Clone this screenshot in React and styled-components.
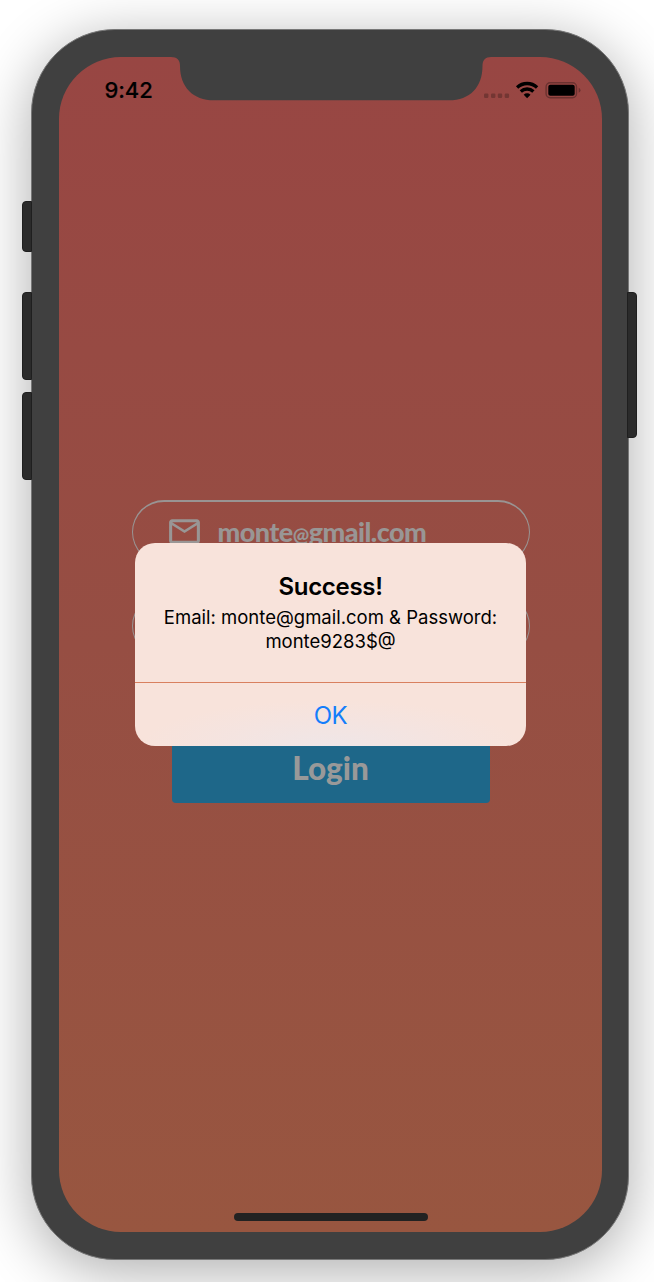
import React from "react";
import styled, { createGlobalStyle } from "styled-components";
import { MdMailOutline, MdLockOutline } from "react-icons/md";

const GlobalStyle = createGlobalStyle`
  * { box-sizing: border-box; }
  body {
    margin: 0;
    background: #fff;
    overflow: hidden;
    font-family: Inter, "Liberation Sans", sans-serif;
  }
`;

const Page = styled.main`
  width: 654px;
  height: 1282px;
  padding: 29px 25px 22px 31px;
  overflow: hidden;
`;

const Phone = styled.div`
  position: relative;
  width: 598px;
  height: 1231px;
  padding: 27px 26px 27px 27px;
  border: 1px solid #777;
  border-radius: 84px;
  background: #404040;
  box-shadow: 0 11px 58px rgba(0, 0, 0, 0.33);
`;

const SideButton = styled.span`
  position: absolute;
  top: ${(p) => p.$top}px;
  ${(p) => p.$side}: ${(p) => (p.$side === "left" ? -10 : -9)}px;
  width: 10px;
  height: ${(p) => p.$height}px;
  background: #2b2b2b;
  border: 1px solid #1f1f1f;
  border-radius: ${(p) => (p.$side === "left" ? "4px 0 0 4px" : "0 4px 4px 0")};
`;

const Screen = styled.div`
  position: relative;
  width: 543px;
  height: 1175px;
  border-radius: 62px;
  overflow: hidden;
  display: flex;
  flex-direction: column;
  align-items: center;
  background: linear-gradient(#984643 0%, #964e43 50%, #985640 100%);
`;

const Notch = styled.svg`
  position: absolute;
  top: 0;
  left: 112px;
`;

const StatusBar = styled.header`
  width: 100%;
  height: 66px;
  padding: 0 20px 0 45.5px;
  display: flex;
  align-items: center;
  justify-content: space-between;
`;

const Time = styled.span`
  font-size: 22px;
  font-weight: 500;
  line-height: 26px;
  letter-spacing: -0.1px;
  color: #000;
  -webkit-text-stroke: 0.2px #000;
`;

const StatusIcons = styled.svg`
  display: block;
`;

const Form = styled.form`
  margin-top: 377px;
  width: 398px;
  display: flex;
  flex-direction: column;
  align-items: center;
`;

const Field = styled.label`
  width: 398px;
  height: 64px;
  margin-bottom: 30px;
  padding: 0 0 3px 33px;
  display: flex;
  align-items: center;
  gap: 16px;
  border: 1.4px solid #999493;
  border-top-width: 2px;
  border-radius: 32px;
  color: #999695;
  svg { width: 37px; height: 37px; flex: none; margin-right: -1px; }
`;

const FieldText = styled.span`
  display: flex;
  align-items: baseline;
  padding-top: 4px;
  font-family: Lato, sans-serif;
  font-size: 27px;
  font-weight: 900;
  line-height: 32px;
  letter-spacing: -0.55px;
`;

const AtSign = styled.span`
  font-size: 19.5px;
`;

const LoginButton = styled.button`
  width: 318px;
  height: 69px;
  margin-top: 46px;
  padding: 0;
  border: 0;
  border-radius: 4px;
  background: #1e6789;
  color: #999;
  font-family: Lato, sans-serif;
  font-size: 31.5px;
  font-weight: 900;
  line-height: 65px;
`;

const Overlay = styled.div`
  position: absolute;
  inset: 0;
  display: flex;
  align-items: center;
  justify-content: center;
`;

const Alert = styled.section`
  width: 391px;
  height: 203px;
  border-radius: 20px;
  overflow: hidden;
  display: flex;
  flex-direction: column;
  text-align: center;
  color: #000;
  background: radial-gradient(ellipse 190px 46px at 50% 100%, #efe6e7 0%, rgba(244, 228, 225, 0.8) 60%, transparent 100%), #f8e3db;
`;

const AlertBody = styled.div`
  height: 139px;
  padding-top: 29px;
`;

const AlertTitle = styled.h1`
  margin: 0;
  font-size: 24px;
  font-weight: 600;
  line-height: 30px;
  letter-spacing: -0.3px;
`;

const AlertText = styled.p`
  margin: 4px 0 0;
  font-size: 18.5px;
  line-height: 23.5px;
  white-space: nowrap;
`;

const AlertAction = styled.button`
  height: 64px;
  padding: 2px 0 0;
  border: 0;
  border-top: 1px solid #d9805f;
  background: transparent;
  color: #147efb;
  font-family: inherit;
  font-size: 24px;
  letter-spacing: -0.5px;
`;

const HomeIndicator = styled.span`
  width: 194px;
  height: 8px;
  margin-top: auto;
  margin-bottom: 11px;
  border-radius: 4px;
  background: #222;
`;

export default function App() {
  return (
    <Page>
      <GlobalStyle />
      <Phone>
        <SideButton $side="left" $top={171} $height={51} />
        <SideButton $side="left" $top={262} $height={88} />
        <SideButton $side="left" $top={362} $height={88} />
        <SideButton $side="right" $top={262} $height={146} />
        <Screen>
          <StatusBar>
            <Time>9:42</Time>
            <StatusIcons width="98" height="18" viewBox="0 0 98 18">
              <g fill="#733633">
                <rect x="0" y="12.5" width="4.4" height="4.4" rx="1.2" />
                <rect x="7" y="12.5" width="4.4" height="4.4" rx="1.2" />
                <rect x="13.8" y="12.5" width="4.4" height="4.4" rx="1.2" />
                <rect x="20.7" y="12.5" width="4.4" height="4.4" rx="1.2" />
              </g>
              <g fill="none" stroke="#000" strokeWidth="3.3">
                <path d="M33.1 6.5A14.5 14.5 0 0 1 53.1 6.5" />
                <path d="M36.8 10.5A9.2 9.2 0 0 1 49.4 10.5" />
              </g>
              <path d="M43.1 17.2L39.7 13.7A4.9 4.9 0 0 1 46.5 13.7Z" fill="#000" />
              <rect x="62.1" y="1.7" width="30.4" height="15" rx="4" fill="none" stroke="#6b3230" strokeWidth="1.4" />
              <rect x="64.3" y="3.8" width="26.4" height="11" rx="2" fill="#000" />
              <path d="M94.7 6.7Q96.5 7.6 96.5 9.3Q96.5 11 94.7 11.8Z" fill="#6b3230" />
            </StatusIcons>
          </StatusBar>
          <Form>
            <Field>
              <MdMailOutline />
              <FieldText>monte<AtSign>@</AtSign>gmail.com</FieldText>
            </Field>
            <Field>
              <MdLockOutline />
            </Field>
            <LoginButton type="button">Login</LoginButton>
          </Form>
          <HomeIndicator />
          <Notch width="320" height="44" viewBox="0 0 320 44">
            <path d="M0 0C6 0 9 3 9 9C9 30 22 43.3 43 43.3H278C299 43.3 311.5 30 311.5 9C311.5 3 314.5 0 320 0Z" fill="#404040" />
          </Notch>
          <Overlay>
            <Alert>
              <AlertBody>
                <AlertTitle>Success!</AlertTitle>
                <AlertText>
                  Email: monte@gmail.com &amp; Password:
                  <br />
                  monte9283$@
                </AlertText>
              </AlertBody>
              <AlertAction>OK</AlertAction>
            </Alert>
          </Overlay>
        </Screen>
      </Phone>
    </Page>
  );
}
